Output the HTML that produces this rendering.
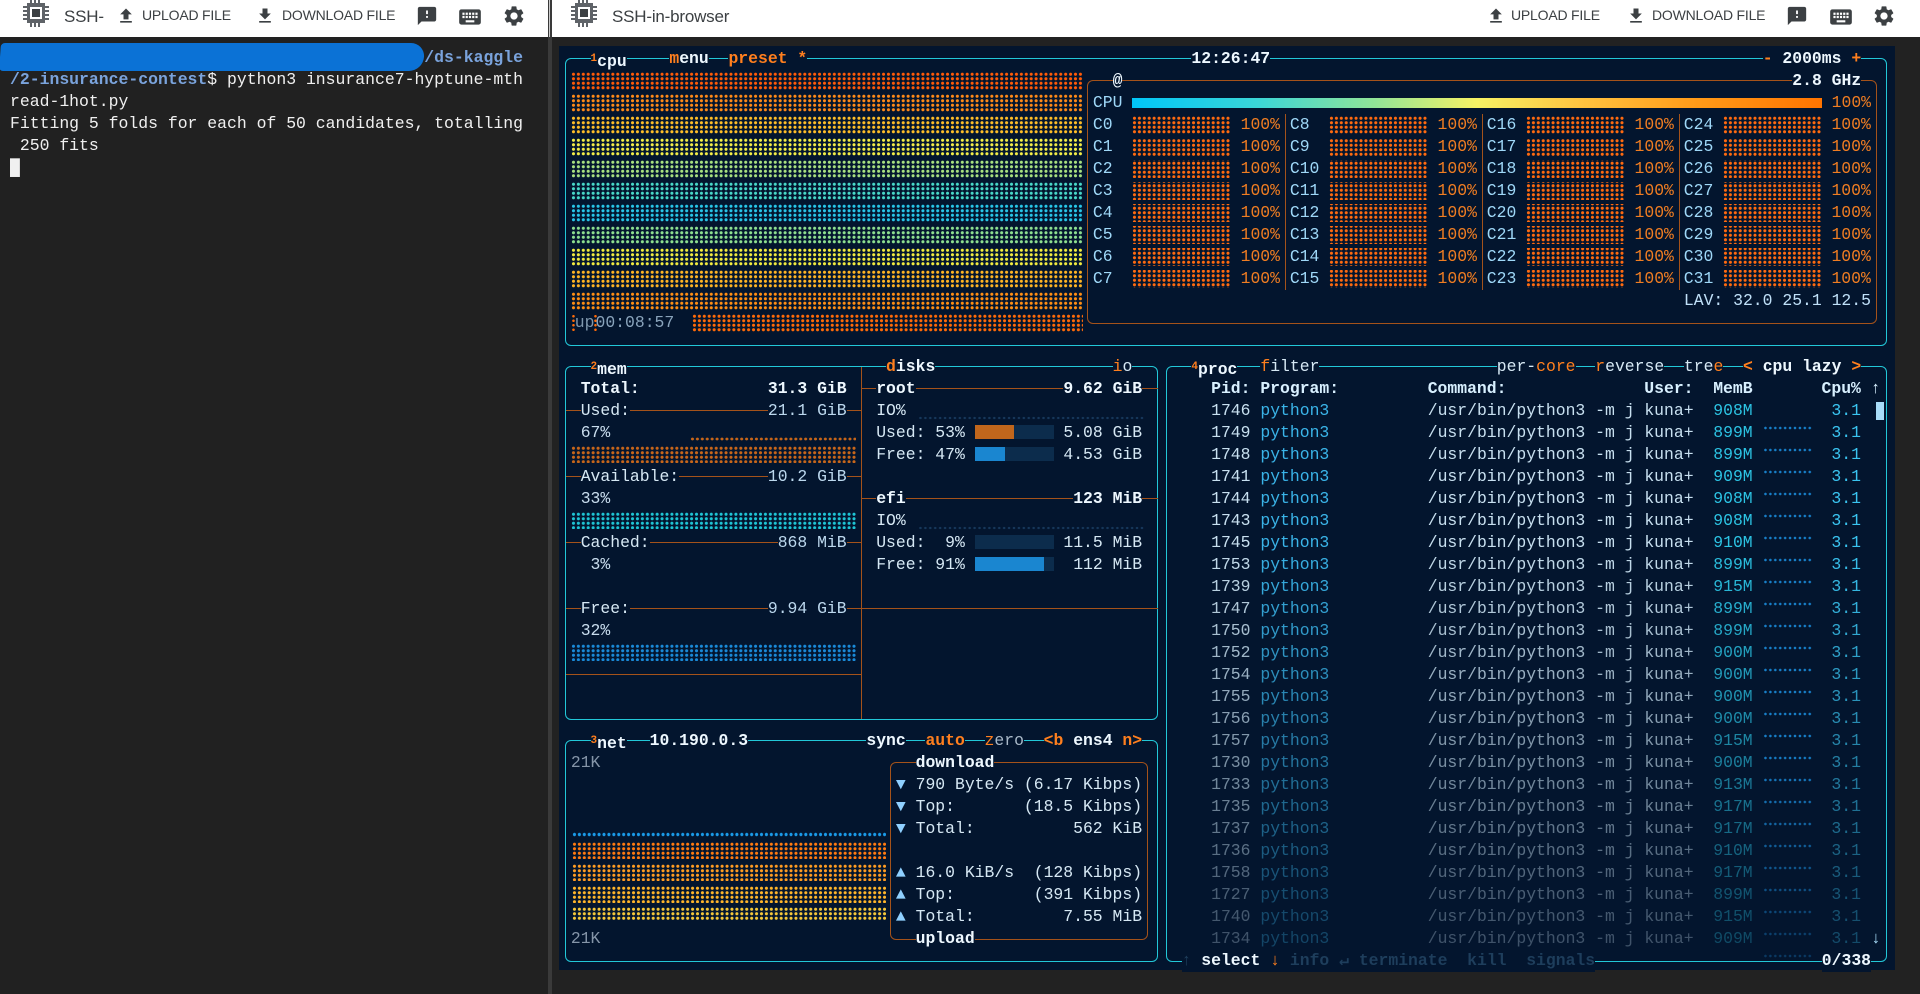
<!DOCTYPE html>
<html><head><meta charset="utf-8">
<style>
*{margin:0;padding:0;box-sizing:border-box}
html,body{width:1920px;height:994px;overflow:hidden;background:#212121;font-family:"Liberation Sans",sans-serif}
.hdr{position:absolute;top:0;height:37px;background:#fff}
.hi{position:absolute;font-size:14px;color:#3c4043;top:7px;letter-spacing:-0.2px}
.ic{position:absolute;fill:#3c4043}
.lp{position:absolute;left:10px;margin:0;font-family:"Liberation Mono",monospace;font-size:16.45px;line-height:21.8px;color:#f0f0f0;white-space:pre}
.lp b{color:#7aa3dc}
.t{position:absolute;left:calc(561px + var(--c)*9.85px);top:calc(48px + var(--r)*22px);font-family:"Liberation Mono",monospace;font-size:16.4167px;line-height:22px;height:22px;white-space:pre;color:#d6e8f4;background:#03152e}
.nb{background:transparent}
.b{font-weight:bold}
.o{color:#ff7f1e}
.w{color:#eef8ff}
.cl{color:#9fd8f8}
.po{color:#f07d22}
.box{position:absolute;border:1.6px solid #22c8d8;border-radius:6px}
.bbox{position:absolute;border:1.4px solid #a4521a;border-radius:6px}
.hl{position:absolute;height:1.4px;background:#a4521a}
.vl{position:absolute;width:1.4px;background:#a4521a}
.d{position:absolute;background-size:100% 22px,4.925px 4.5px}
.dd{position:absolute;background-size:4.925px 4.5px}
.dim{color:#1e3e5c}
</style></head><body>

<!-- left terminal (body background) -->
<div class="lp" style="top:47px"><b>                                          /ds-kaggle</b></div>
<div style="position:absolute;left:0;top:43px;width:424px;height:28px;background:#0b72d6;border-radius:4px 14px 14px 4px;transform:skewX(-4deg)"></div>
<div class="lp" style="top:69px"><b>/2-insurance-contest</b>$ python3 insurance7-hyptune-mth</div>
<div class="lp" style="top:91px">read-1hot.py</div>
<div class="lp" style="top:113px">Fitting 5 folds for each of 50 candidates, totalling</div>
<div class="lp" style="top:135px"> 250 fits</div>
<div class="lp" style="top:157px">█</div>

<!-- left header -->
<div class="hdr" style="left:0;width:548px"></div>
<svg class="ic" style="left:20px;top:-2px" width="32" height="32" viewBox="0 0 32 32"><g fill="#5f6368"><rect x="7" y="5" width="18" height="20"/><rect x="3" y="8" width="4" height="2"/><rect x="3" y="12" width="4" height="2"/><rect x="3" y="16" width="4" height="2"/><rect x="3" y="20" width="4" height="2"/><rect x="25" y="8" width="4" height="2"/><rect x="25" y="12" width="4" height="2"/><rect x="25" y="16" width="4" height="2"/><rect x="25" y="20" width="4" height="2"/><rect x="10" y="25" width="2" height="4"/><rect x="14" y="25" width="2" height="4"/><rect x="18" y="25" width="2" height="4"/><rect x="10" y="1" width="2" height="4"/><rect x="14" y="1" width="2" height="4"/><rect x="18" y="1" width="2" height="4"/></g><rect x="10" y="9" width="12" height="12" fill="#fff"/><rect x="12" y="11" width="8" height="8" fill="#3c4043"/></svg>
<div class="hi" style="left:64px;top:7px;font-size:17px">SSH-</div>
<svg class="ic" style="left:116px;top:6px" width="20" height="20" viewBox="0 0 24 24"><path d="M9 16h6v-6h4l-7-7-7 7h4zm-4 2h14v2H5z"/></svg>
<div class="hi" style="left:142px">UPLOAD FILE</div>
<svg class="ic" style="left:255px;top:6px" width="20" height="20" viewBox="0 0 24 24"><path d="M19 9h-4V3H9v6H5l7 7 7-7zM5 18v2h14v-2H5z"/></svg>
<div class="hi" style="left:282px">DOWNLOAD FILE</div>
<svg class="ic" style="left:416px;top:5px" width="22" height="22" viewBox="0 0 24 24"><path d="M20 2H4c-1.1 0-2 .9-2 2v18l4-4h14c1.1 0 2-.9 2-2V4c0-1.1-.9-2-2-2zm-7 12h-2v-2h2v2zm0-4h-2V6h2v4z"/></svg>
<svg class="ic" style="left:457px;top:4px" width="26" height="26" viewBox="0 0 24 24"><path d="M20 5H4c-1.1 0-1.99.9-1.99 2L2 17c0 1.1.9 2 2 2h16c1.1 0 2-.9 2-2V7c0-1.1-.9-2-2-2zm-9 3h2v2h-2V8zm0 3h2v2h-2v-2zM8 8h2v2H8V8zm0 3h2v2H8v-2zm-1 2H5v-2h2v2zm0-3H5V8h2v2zm9 7H8v-2h8v2zm0-4h-2v-2h2v2zm0-3h-2V8h2v2zm3 3h-2v-2h2v2zm0-3h-2V8h2v2z"/></svg>
<svg class="ic" style="left:502px;top:4px" width="24" height="24" viewBox="0 0 24 24"><path d="M19.14 12.94c.04-.3.06-.61.06-.94 0-.32-.02-.64-.07-.94l2.03-1.58c.18-.14.23-.41.12-.61l-1.920-3.32c-.12-.22-.37-.29-.59-.22l-2.39.96c-.5-.38-1.03-.7-1.62-.94l-.36-2.54c-.04-.24-.24-.41-.48-.41h-3.84c-.24 0-.43.17-.47.41l-.36 2.54c-.59.24-1.13.57-1.62.94l-2.39-.96c-.22-.08-.47 0-.59.22L2.74 8.87c-.12.21-.08.47.12.61l2.03 1.58c-.05.3-.09.63-.09.94s.02.64.07.94l-2.03 1.58c-.18.14-.23.41-.12.61l1.92 3.32c.12.22.37.29.59.22l2.39-.96c.5.38 1.03.7 1.62.94l.36 2.54c.05.24.24.41.48.41h3.84c.24 0 .44-.17.47-.41l.36-2.54c.59-.24 1.13-.56 1.62-.94l2.39.96c.22.08.47 0 .59-.22l1.92-3.32c.12-.22.07-.47-.12-.61l-2.01-1.58zM12 15.6c-1.98 0-3.6-1.62-3.6-3.6s1.62-3.6 3.6-3.6 3.6 1.62 3.6 3.6-1.62 3.6-3.6 3.6z"/></svg>
<div style="position:absolute;left:548px;top:0;width:4px;height:994px;background:#3a3a3a"></div>
<div style="position:absolute;left:549px;top:0;width:1px;height:37px;background:#ccc"></div>

<!-- right background -->
<div style="position:absolute;left:552px;top:37px;width:1368px;height:957px;background:#222"></div>

<!-- right header -->
<div class="hdr" style="left:552px;width:1368px"></div>
<svg class="ic" style="left:568px;top:-2px" width="32" height="32" viewBox="0 0 32 32"><g fill="#5f6368"><rect x="7" y="5" width="18" height="20"/><rect x="3" y="8" width="4" height="2"/><rect x="3" y="12" width="4" height="2"/><rect x="3" y="16" width="4" height="2"/><rect x="3" y="20" width="4" height="2"/><rect x="25" y="8" width="4" height="2"/><rect x="25" y="12" width="4" height="2"/><rect x="25" y="16" width="4" height="2"/><rect x="25" y="20" width="4" height="2"/><rect x="10" y="25" width="2" height="4"/><rect x="14" y="25" width="2" height="4"/><rect x="18" y="25" width="2" height="4"/><rect x="10" y="1" width="2" height="4"/><rect x="14" y="1" width="2" height="4"/><rect x="18" y="1" width="2" height="4"/></g><rect x="10" y="9" width="12" height="12" fill="#fff"/><rect x="12" y="11" width="8" height="8" fill="#3c4043"/></svg>
<div class="hi" style="left:612px;top:7px;font-size:17px">SSH-in-browser</div>
<svg class="ic" style="left:1486px;top:6px" width="20" height="20" viewBox="0 0 24 24"><path d="M9 16h6v-6h4l-7-7-7 7h4zm-4 2h14v2H5z"/></svg>
<div class="hi" style="left:1511px">UPLOAD FILE</div>
<svg class="ic" style="left:1626px;top:6px" width="20" height="20" viewBox="0 0 24 24"><path d="M19 9h-4V3H9v6H5l7 7 7-7zM5 18v2h14v-2H5z"/></svg>
<div class="hi" style="left:1652px">DOWNLOAD FILE</div>
<svg class="ic" style="left:1786px;top:5px" width="22" height="22" viewBox="0 0 24 24"><path d="M20 2H4c-1.1 0-2 .9-2 2v18l4-4h14c1.1 0 2-.9 2-2V4c0-1.1-.9-2-2-2zm-7 12h-2v-2h2v2zm0-4h-2V6h2v4z"/></svg>
<svg class="ic" style="left:1828px;top:4px" width="26" height="26" viewBox="0 0 24 24"><path d="M20 5H4c-1.1 0-1.99.9-1.99 2L2 17c0 1.1.9 2 2 2h16c1.1 0 2-.9 2-2V7c0-1.1-.9-2-2-2zm-9 3h2v2h-2V8zm0 3h2v2h-2v-2zM8 8h2v2H8V8zm0 3h2v2H8v-2zm-1 2H5v-2h2v2zm0-3H5V8h2v2zm9 7H8v-2h8v2zm0-4h-2v-2h2v2zm0-3h-2V8h2v2zm3 3h-2v-2h2v2zm0-3h-2V8h2v2z"/></svg>
<svg class="ic" style="left:1872px;top:4px" width="24" height="24" viewBox="0 0 24 24"><path d="M19.14 12.94c.04-.3.06-.61.06-.94 0-.32-.02-.64-.07-.94l2.03-1.58c.18-.14.23-.41.12-.61l-1.92-3.32c-.12-.22-.37-.29-.59-.22l-2.39.96c-.5-.38-1.03-.7-1.62-.94l-.36-2.54c-.04-.24-.24-.41-.48-.41h-3.84c-.24 0-.43.17-.47.41l-.36 2.54c-.59.24-1.13.57-1.62.94l-2.39-.96c-.22-.08-.47 0-.59.22L2.74 8.87c-.12.21-.08.47.12.61l2.03 1.58c-.05.3-.09.63-.09.94s.02.64.07.94l-2.03 1.58c-.18.14-.23.41-.12.61l1.92 3.32c.12.22.37.29.59.22l2.39-.96c.5.38 1.03.7 1.62.94l.36 2.54c.05.24.24.41.48.41h3.84c.24 0 .44-.17.47-.41l.36-2.54c.59-.24 1.13-.56 1.62-.94l2.39.96c.22.08.47 0 .59-.22l1.92-3.32c.12-.22.07-.47-.12-.61l-2.01-1.58zM12 15.6c-1.98 0-3.6-1.62-3.6-3.6s1.62-3.6 3.6-3.6 3.6 1.62 3.6 3.6-1.62 3.6-3.6 3.6z"/></svg>

<!-- btop -->
<div style="position:absolute;left:559px;top:46px;width:1336px;height:924px;background:#03152e"></div>

<div class="box" style="left:565px;top:58px;width:1322px;height:288px"></div>
<div class="bbox" style="left:1087px;top:80px;width:790px;height:244px"></div>
<div class="box" style="left:565px;top:366px;width:593px;height:354px"></div>
<div class="vl" style="left:861px;top:367px;height:352px"></div>
<div class="box" style="left:565px;top:740px;width:593px;height:222px"></div>
<div class="bbox" style="left:890px;top:762px;width:258px;height:178px"></div>
<div class="box" style="left:1166px;top:366px;width:721px;height:596px"></div>

<div class="vl" style="left:1285px;top:114px;height:176px"></div>
<div class="vl" style="left:1482px;top:114px;height:176px"></div>
<div class="vl" style="left:1679px;top:114px;height:176px"></div>

<div class="hl" style="left:566px;top:410px;width:296px"></div>
<div class="hl" style="left:566px;top:476px;width:296px"></div>
<div class="hl" style="left:566px;top:542px;width:296px"></div>
<div class="hl" style="left:566px;top:608px;width:592px"></div>
<div class="hl" style="left:566px;top:674px;width:296px"></div>
<div class="hl" style="left:861px;top:388px;width:297px"></div>
<div class="hl" style="left:861px;top:498px;width:297px"></div>

<div class="dd" style="left:571px;top:72px;width:512px;height:18px;background-image:radial-gradient(circle,#ff5a08 1.3px,transparent 1.8px)"></div>
<div class="dd" style="left:571px;top:94px;width:512px;height:18px;background-image:radial-gradient(circle,#ff8a18 1.3px,transparent 1.8px)"></div>
<div class="dd" style="left:571px;top:116px;width:512px;height:18px;background-image:radial-gradient(circle,#ffbe28 1.3px,transparent 1.8px)"></div>
<div class="dd" style="left:571px;top:138px;width:512px;height:18px;background-image:radial-gradient(circle,#f4ee48 1.3px,transparent 1.8px)"></div>
<div class="dd" style="left:571px;top:160px;width:512px;height:18px;background-image:radial-gradient(circle,#a8e080 1.3px,transparent 1.8px)"></div>
<div class="dd" style="left:571px;top:182px;width:512px;height:18px;background-image:radial-gradient(circle,#48d8c8 1.3px,transparent 1.8px)"></div>
<div class="dd" style="left:571px;top:204px;width:512px;height:18px;background-image:radial-gradient(circle,#28c6e8 1.3px,transparent 1.8px)"></div>
<div class="dd" style="left:571px;top:226px;width:512px;height:18px;background-image:radial-gradient(circle,#8ee090 1.3px,transparent 1.8px)"></div>
<div class="dd" style="left:571px;top:248px;width:512px;height:18px;background-image:radial-gradient(circle,#f2ec40 1.3px,transparent 1.8px)"></div>
<div class="dd" style="left:571px;top:270px;width:512px;height:18px;background-image:radial-gradient(circle,#ffb424 1.3px,transparent 1.8px)"></div>
<div class="dd" style="left:571px;top:292px;width:512px;height:18px;background-image:radial-gradient(circle,#ff8e14 1.3px,transparent 1.8px)"></div>
<div class="dd" style="left:692px;top:314px;width:391px;height:18px;background-image:radial-gradient(circle,#ff6a08 1.3px,transparent 1.8px)"></div>
<div class="dd" style="left:571px;top:314px;width:4px;height:18px;background-image:radial-gradient(circle,#ff6a08 1.1px,transparent 1.5px)"></div>
<div class="dd" style="left:593px;top:314px;width:4px;height:18px;background-image:radial-gradient(circle,#ff6a08 1.1px,transparent 1.5px)"></div>
<div class="t nb" style="--c:1.4;--r:12;color:#7f97ad">up</div>
<div class="t nb" style="--c:3.5;--r:12;color:#8aa4bc">00:08:57</div>

<div class="t b" style="--c:3;--r:0"><span class="o" style="font-size:11px;vertical-align:5px">1</span><span class="w">cpu</span></div>
<div class="t b" style="--c:11;--r:0"><span class="o">m</span><span class="w">enu</span></div>
<div class="t b" style="--c:17;--r:0"><span class="o">preset *</span></div>
<div class="t b w" style="--c:64;--r:0">12:26:47</div>
<div class="t b" style="--c:122;--r:0"><span class="o">-</span><span class="w"> 2000ms </span><span class="o">+</span></div>
<div class="t b w" style="--c:56;--r:1">@</div>
<div class="t b w" style="--c:125;--r:1">2.8 GHz</div>
<div class="t cl" style="--c:54;--r:2">CPU</div>
<div style="position:absolute;left:1132px;top:98px;width:690px;height:10px;background:linear-gradient(90deg,#00c6f8,#3ad6d8 18%,#90e498 35%,#f6f264 50%,#ffc440 65%,#ff9a18 82%,#ff7400)"></div>
<div class="t po" style="--c:129;--r:2">100%</div>

<div class="d" style="left:1132px;top:116px;width:98px;height:174px;background-image:repeating-linear-gradient(180deg,transparent 0 18px,#03152e 18px 22px),radial-gradient(circle,#ff6a10 1.3px,transparent 1.8px)"></div>
<div class="d" style="left:1329px;top:116px;width:98px;height:174px;background-image:repeating-linear-gradient(180deg,transparent 0 18px,#03152e 18px 22px),radial-gradient(circle,#ff6a10 1.3px,transparent 1.8px)"></div>
<div class="d" style="left:1526px;top:116px;width:98px;height:174px;background-image:repeating-linear-gradient(180deg,transparent 0 18px,#03152e 18px 22px),radial-gradient(circle,#ff6a10 1.3px,transparent 1.8px)"></div>
<div class="d" style="left:1723px;top:116px;width:98px;height:174px;background-image:repeating-linear-gradient(180deg,transparent 0 18px,#03152e 18px 22px),radial-gradient(circle,#ff6a10 1.3px,transparent 1.8px)"></div>

<div class="t nb" style="--c:54;--r:3"><span class="cl">C0</span>             <span class="po">100%</span> <span class="cl">C8</span>             <span class="po">100%</span> <span class="cl">C16</span>            <span class="po">100%</span> <span class="cl">C24</span>            <span class="po">100%</span></div>
<div class="t nb" style="--c:54;--r:4"><span class="cl">C1</span>             <span class="po">100%</span> <span class="cl">C9</span>             <span class="po">100%</span> <span class="cl">C17</span>            <span class="po">100%</span> <span class="cl">C25</span>            <span class="po">100%</span></div>
<div class="t nb" style="--c:54;--r:5"><span class="cl">C2</span>             <span class="po">100%</span> <span class="cl">C10</span>            <span class="po">100%</span> <span class="cl">C18</span>            <span class="po">100%</span> <span class="cl">C26</span>            <span class="po">100%</span></div>
<div class="t nb" style="--c:54;--r:6"><span class="cl">C3</span>             <span class="po">100%</span> <span class="cl">C11</span>            <span class="po">100%</span> <span class="cl">C19</span>            <span class="po">100%</span> <span class="cl">C27</span>            <span class="po">100%</span></div>
<div class="t nb" style="--c:54;--r:7"><span class="cl">C4</span>             <span class="po">100%</span> <span class="cl">C12</span>            <span class="po">100%</span> <span class="cl">C20</span>            <span class="po">100%</span> <span class="cl">C28</span>            <span class="po">100%</span></div>
<div class="t nb" style="--c:54;--r:8"><span class="cl">C5</span>             <span class="po">100%</span> <span class="cl">C13</span>            <span class="po">100%</span> <span class="cl">C21</span>            <span class="po">100%</span> <span class="cl">C29</span>            <span class="po">100%</span></div>
<div class="t nb" style="--c:54;--r:9"><span class="cl">C6</span>             <span class="po">100%</span> <span class="cl">C14</span>            <span class="po">100%</span> <span class="cl">C22</span>            <span class="po">100%</span> <span class="cl">C30</span>            <span class="po">100%</span></div>
<div class="t nb" style="--c:54;--r:10"><span class="cl">C7</span>             <span class="po">100%</span> <span class="cl">C15</span>            <span class="po">100%</span> <span class="cl">C23</span>            <span class="po">100%</span> <span class="cl">C31</span>            <span class="po">100%</span></div>
<div class="t nb" style="--c:114;--r:11;color:#c0e0f8">LAV: 32.0 25.1 12.5</div>

<div class="t b" style="--c:3;--r:14"><span class="o" style="font-size:11px;vertical-align:5px">2</span><span class="w">mem</span></div>
<div class="t b" style="--c:33;--r:14"><span class="o">d</span><span class="w">isks</span></div>
<div class="t" style="--c:56;--r:14"><span class="o">i</span>o</div>
<div class="t b w" style="--c:2;--r:15">Total:</div>
<div class="t b w" style="--c:21;--r:15">31.3 GiB</div>
<div class="t" style="--c:2;--r:16">Used:</div>
<div class="t" style="--c:21;--r:16;color:#bcd8ee">21.1 GiB</div>
<div class="t nb" style="--c:2;--r:17;color:#c8dced">67%</div>
<div class="dd" style="left:690px;top:437px;width:166px;height:4px;background-image:radial-gradient(circle,#c8661a 1.3px,transparent 1.8px)"></div>
<div class="dd" style="left:571px;top:446px;width:286px;height:17px;background-image:radial-gradient(circle,#c8661a 1.3px,transparent 1.8px)"></div>
<div class="t" style="--c:2;--r:19">Available:</div>
<div class="t" style="--c:21;--r:19;color:#bcd8ee">10.2 GiB</div>
<div class="t nb" style="--c:2;--r:20;color:#c8dced">33%</div>
<div class="dd" style="left:571px;top:512px;width:286px;height:17px;background-image:radial-gradient(circle,#1ec4d4 1.3px,transparent 1.8px)"></div>
<div class="t" style="--c:2;--r:22">Cached:</div>
<div class="t" style="--c:22;--r:22;color:#bcd8ee">868 MiB</div>
<div class="t nb" style="--c:3;--r:23;color:#c8dced">3%</div>
<div class="t" style="--c:2;--r:25">Free:</div>
<div class="t" style="--c:21;--r:25;color:#bcd8ee">9.94 GiB</div>
<div class="t nb" style="--c:2;--r:26;color:#c8dced">32%</div>
<div class="dd" style="left:571px;top:644px;width:286px;height:17px;background-image:radial-gradient(circle,#1a8ad8 1.3px,transparent 1.8px)"></div>

<div class="t b w" style="--c:32;--r:15">root</div>
<div class="t b w" style="--c:51;--r:15">9.62 GiB</div>
<div class="t" style="--c:32;--r:16">IO%</div>
<div class="dd" style="left:918px;top:416px;width:226px;height:4px;background-image:radial-gradient(circle,#16375a 1.1px,transparent 1.5px)"></div>
<div class="t" style="--c:32;--r:17">Used: 53%</div>
<div style="position:absolute;left:975px;top:425px;width:79px;height:14px;background:#0c2c4c"></div>
<div style="position:absolute;left:975px;top:425px;width:39px;height:14px;background:#c0661c"></div>
<div class="t" style="--c:51;--r:17">5.08 GiB</div>
<div class="t" style="--c:32;--r:18">Free: 47%</div>
<div style="position:absolute;left:975px;top:447px;width:79px;height:14px;background:#0c2c4c"></div>
<div style="position:absolute;left:975px;top:447px;width:30px;height:14px;background:#1a86d0"></div>
<div class="t" style="--c:51;--r:18">4.53 GiB</div>
<div class="t b w" style="--c:32;--r:20">efi</div>
<div class="t b w" style="--c:52;--r:20">123 MiB</div>
<div class="t" style="--c:32;--r:21">IO%</div>
<div class="dd" style="left:918px;top:526px;width:226px;height:4px;background-image:radial-gradient(circle,#16375a 1.1px,transparent 1.5px)"></div>
<div class="t" style="--c:32;--r:22">Used:  9%</div>
<div style="position:absolute;left:975px;top:535px;width:79px;height:14px;background:#0c2c4c"></div>
<div class="t" style="--c:51;--r:22">11.5 MiB</div>
<div class="t" style="--c:32;--r:23">Free: 91%</div>
<div style="position:absolute;left:975px;top:557px;width:79px;height:14px;background:#0c2c4c"></div>
<div style="position:absolute;left:975px;top:557px;width:69px;height:14px;background:#1a86d0"></div>
<div class="t" style="--c:52;--r:23">112 MiB</div>

<div class="t b" style="--c:3;--r:31"><span class="o" style="font-size:11px;vertical-align:5px">3</span><span class="w">net</span></div>
<div class="t b w" style="--c:9;--r:31">10.190.0.3</div>
<div class="t b w" style="--c:31;--r:31">sync</div>
<div class="t b o" style="--c:37;--r:31">auto</div>
<div class="t" style="--c:43;--r:31;color:#a8b8c8"><span class="o">z</span>ero</div>
<div class="t b" style="--c:49;--r:31"><span class="o">&lt;b</span><span class="w"> ens4 </span><span class="o">n&gt;</span></div>
<div class="t nb" style="--c:1;--r:32;color:#8595a8">21K</div>
<div class="t nb" style="--c:1;--r:40;color:#8595a8">21K</div>
<div class="dd" style="left:572px;top:832px;width:314px;height:5px;background-image:radial-gradient(circle,#1a9ae8 1.3px,transparent 1.8px)"></div>
<div class="dd" style="left:572px;top:842px;width:314px;height:17px;background-image:radial-gradient(circle,#ff7a10 1.3px,transparent 1.8px)"></div>
<div class="dd" style="left:572px;top:864px;width:314px;height:17px;background-image:radial-gradient(circle,#ff9c22 1.3px,transparent 1.8px)"></div>
<div class="dd" style="left:572px;top:886px;width:314px;height:17px;background-image:radial-gradient(circle,#ffb52a 1.3px,transparent 1.8px)"></div>
<div class="dd" style="left:572px;top:907px;width:314px;height:14px;background-image:radial-gradient(circle,#f6c83a 1.3px,transparent 1.8px)"></div>
<div class="t b w" style="--c:36;--r:32">download</div>
<div class="t nb" style="--c:34;--r:33"><span style="color:#8fd0ff">▼</span> 790 Byte/s (6.17 Kibps)</div>
<div class="t nb" style="--c:34;--r:34"><span style="color:#8fd0ff">▼</span> Top:       (18.5 Kibps)</div>
<div class="t nb" style="--c:34;--r:35"><span style="color:#8fd0ff">▼</span> Total:          562 KiB</div>
<div class="t nb" style="--c:34;--r:37"><span style="color:#8fd0ff">▲</span> 16.0 KiB/s  (128 Kibps)</div>
<div class="t nb" style="--c:34;--r:38"><span style="color:#8fd0ff">▲</span> Top:        (391 Kibps)</div>
<div class="t nb" style="--c:34;--r:39"><span style="color:#8fd0ff">▲</span> Total:         7.55 MiB</div>
<div class="t b w" style="--c:36;--r:40">upload</div>

<div class="t b" style="--c:64;--r:14"><span class="o" style="font-size:11px;vertical-align:5px">4</span><span class="w">proc</span></div>
<div class="t" style="--c:71;--r:14"><span class="o">f</span>ilter</div>
<div class="t" style="--c:95;--r:14">per-<span class="o">core</span></div>
<div class="t" style="--c:105;--r:14"><span class="o">r</span>everse</div>
<div class="t" style="--c:114;--r:14">tre<span class="o">e</span></div>
<div class="t b" style="--c:120;--r:14"><span class="o">&lt;</span><span class="w"> cpu lazy </span><span class="o">&gt;</span></div>
<div class="t b nb" style="--c:66;--r:15;color:#d8f0ff">Pid: Program:         Command:              User:  MemB       Cpu% ↑</div>
<div style="position:absolute;left:1876px;top:402px;width:8px;height:18px;background:#a8dcf8"></div>

<div class="dd" style="left:1763px;top:417px;width:49px;height:550px;background-size:4.925px 22px;background-image:radial-gradient(circle,#1a8ad8 1.1px,transparent 1.5px);-webkit-mask:linear-gradient(#000 0 60%,rgba(0,0,0,.3));opacity:.9"></div>

<div class="t nb" style="--c:66;--r:16"><span style="color:#c8e0f0">1746</span> <span style="color:#3ab4e8">python3</span>          <span style="color:#c8e0f0">/usr/bin/python3 -m j kuna+</span>  <span style="color:#2cc4e4">908M</span>        <span style="color:#3ac4f0">3.1</span></div>
<div class="t nb" style="--c:66;--r:17"><span style="color:#c8e0f0">1749</span> <span style="color:#3ab4e8">python3</span>          <span style="color:#c8e0f0">/usr/bin/python3 -m j kuna+</span>  <span style="color:#2cc4e4">899M</span>        <span style="color:#3ac4f0">3.1</span></div>
<div class="t nb" style="--c:66;--r:18"><span style="color:#c8e0f0">1748</span> <span style="color:#3ab4e8">python3</span>          <span style="color:#c8e0f0">/usr/bin/python3 -m j kuna+</span>  <span style="color:#2cc4e4">899M</span>        <span style="color:#3ac4f0">3.1</span></div>
<div class="t nb" style="--c:66;--r:19"><span style="color:#c8e0f0">1741</span> <span style="color:#3ab4e8">python3</span>          <span style="color:#c8e0f0">/usr/bin/python3 -m j kuna+</span>  <span style="color:#2cc4e4">909M</span>        <span style="color:#3ac4f0">3.1</span></div>
<div class="t nb" style="--c:66;--r:20"><span style="color:#c8e0f0">1744</span> <span style="color:#3ab4e8">python3</span>          <span style="color:#c8e0f0">/usr/bin/python3 -m j kuna+</span>  <span style="color:#2cc4e4">908M</span>        <span style="color:#3ac4f0">3.1</span></div>
<div class="t nb" style="--c:66;--r:21"><span style="color:#c8e0f0">1743</span> <span style="color:#3ab4e8">python3</span>          <span style="color:#c8e0f0">/usr/bin/python3 -m j kuna+</span>  <span style="color:#2cc4e4">908M</span>        <span style="color:#3ac4f0">3.1</span></div>
<div class="t nb" style="--c:66;--r:22"><span style="color:#c8e0f0">1745</span> <span style="color:#3ab4e8">python3</span>          <span style="color:#c8e0f0">/usr/bin/python3 -m j kuna+</span>  <span style="color:#2cc4e4">910M</span>        <span style="color:#3ac4f0">3.1</span></div>
<div class="t nb" style="--c:66;--r:23;opacity:.96"><span style="color:#c8e0f0">1753</span> <span style="color:#3ab4e8">python3</span>          <span style="color:#c8e0f0">/usr/bin/python3 -m j kuna+</span>  <span style="color:#2cc4e4">899M</span>        <span style="color:#3ac4f0">3.1</span></div>
<div class="t nb" style="--c:66;--r:24;opacity:.92"><span style="color:#c8e0f0">1739</span> <span style="color:#3ab4e8">python3</span>          <span style="color:#c8e0f0">/usr/bin/python3 -m j kuna+</span>  <span style="color:#2cc4e4">915M</span>        <span style="color:#3ac4f0">3.1</span></div>
<div class="t nb" style="--c:66;--r:25;opacity:.88"><span style="color:#c8e0f0">1747</span> <span style="color:#3ab4e8">python3</span>          <span style="color:#c8e0f0">/usr/bin/python3 -m j kuna+</span>  <span style="color:#2cc4e4">899M</span>        <span style="color:#3ac4f0">3.1</span></div>
<div class="t nb" style="--c:66;--r:26;opacity:.84"><span style="color:#c8e0f0">1750</span> <span style="color:#3ab4e8">python3</span>          <span style="color:#c8e0f0">/usr/bin/python3 -m j kuna+</span>  <span style="color:#2cc4e4">899M</span>        <span style="color:#3ac4f0">3.1</span></div>
<div class="t nb" style="--c:66;--r:27;opacity:.8"><span style="color:#c8e0f0">1752</span> <span style="color:#3ab4e8">python3</span>          <span style="color:#c8e0f0">/usr/bin/python3 -m j kuna+</span>  <span style="color:#2cc4e4">900M</span>        <span style="color:#3ac4f0">3.1</span></div>
<div class="t nb" style="--c:66;--r:28;opacity:.76"><span style="color:#c8e0f0">1754</span> <span style="color:#3ab4e8">python3</span>          <span style="color:#c8e0f0">/usr/bin/python3 -m j kuna+</span>  <span style="color:#2cc4e4">900M</span>        <span style="color:#3ac4f0">3.1</span></div>
<div class="t nb" style="--c:66;--r:29;opacity:.72"><span style="color:#c8e0f0">1755</span> <span style="color:#3ab4e8">python3</span>          <span style="color:#c8e0f0">/usr/bin/python3 -m j kuna+</span>  <span style="color:#2cc4e4">900M</span>        <span style="color:#3ac4f0">3.1</span></div>
<div class="t nb" style="--c:66;--r:30;opacity:.68"><span style="color:#c8e0f0">1756</span> <span style="color:#3ab4e8">python3</span>          <span style="color:#c8e0f0">/usr/bin/python3 -m j kuna+</span>  <span style="color:#2cc4e4">900M</span>        <span style="color:#3ac4f0">3.1</span></div>
<div class="t nb" style="--c:66;--r:31;opacity:.64"><span style="color:#c8e0f0">1757</span> <span style="color:#3ab4e8">python3</span>          <span style="color:#c8e0f0">/usr/bin/python3 -m j kuna+</span>  <span style="color:#2cc4e4">915M</span>        <span style="color:#3ac4f0">3.1</span></div>
<div class="t nb" style="--c:66;--r:32;opacity:.6"><span style="color:#c8e0f0">1730</span> <span style="color:#3ab4e8">python3</span>          <span style="color:#c8e0f0">/usr/bin/python3 -m j kuna+</span>  <span style="color:#2cc4e4">900M</span>        <span style="color:#3ac4f0">3.1</span></div>
<div class="t nb" style="--c:66;--r:33;opacity:.56"><span style="color:#c8e0f0">1733</span> <span style="color:#3ab4e8">python3</span>          <span style="color:#c8e0f0">/usr/bin/python3 -m j kuna+</span>  <span style="color:#2cc4e4">913M</span>        <span style="color:#3ac4f0">3.1</span></div>
<div class="t nb" style="--c:66;--r:34;opacity:.52"><span style="color:#c8e0f0">1735</span> <span style="color:#3ab4e8">python3</span>          <span style="color:#c8e0f0">/usr/bin/python3 -m j kuna+</span>  <span style="color:#2cc4e4">917M</span>        <span style="color:#3ac4f0">3.1</span></div>
<div class="t nb" style="--c:66;--r:35;opacity:.48"><span style="color:#c8e0f0">1737</span> <span style="color:#3ab4e8">python3</span>          <span style="color:#c8e0f0">/usr/bin/python3 -m j kuna+</span>  <span style="color:#2cc4e4">917M</span>        <span style="color:#3ac4f0">3.1</span></div>
<div class="t nb" style="--c:66;--r:36;opacity:.44"><span style="color:#c8e0f0">1736</span> <span style="color:#3ab4e8">python3</span>          <span style="color:#c8e0f0">/usr/bin/python3 -m j kuna+</span>  <span style="color:#2cc4e4">910M</span>        <span style="color:#3ac4f0">3.1</span></div>
<div class="t nb" style="--c:66;--r:37;opacity:.4"><span style="color:#c8e0f0">1758</span> <span style="color:#3ab4e8">python3</span>          <span style="color:#c8e0f0">/usr/bin/python3 -m j kuna+</span>  <span style="color:#2cc4e4">917M</span>        <span style="color:#3ac4f0">3.1</span></div>
<div class="t nb" style="--c:66;--r:38;opacity:.36"><span style="color:#c8e0f0">1727</span> <span style="color:#3ab4e8">python3</span>          <span style="color:#c8e0f0">/usr/bin/python3 -m j kuna+</span>  <span style="color:#2cc4e4">899M</span>        <span style="color:#3ac4f0">3.1</span></div>
<div class="t nb" style="--c:66;--r:39;opacity:.33"><span style="color:#c8e0f0">1740</span> <span style="color:#3ab4e8">python3</span>          <span style="color:#c8e0f0">/usr/bin/python3 -m j kuna+</span>  <span style="color:#2cc4e4">915M</span>        <span style="color:#3ac4f0">3.1</span></div>
<div class="t nb" style="--c:66;--r:40;opacity:.3"><span style="color:#c8e0f0">1734</span> <span style="color:#3ab4e8">python3</span>          <span style="color:#c8e0f0">/usr/bin/python3 -m j kuna+</span>  <span style="color:#2cc4e4">909M</span>        <span style="color:#3ac4f0">3.1</span></div>
<div class="t nb" style="--c:133;--r:40;color:#a8dcf8">↓</div>

<div class="t b" style="--c:63;--r:41"><span class="dim">↑ </span><span class="w">select </span><span class="o">↓</span><span class="dim"> info ↵ terminate  kill  signals</span></div>
<div class="t b w" style="--c:128;--r:41">0/338</div>
</body></html>
